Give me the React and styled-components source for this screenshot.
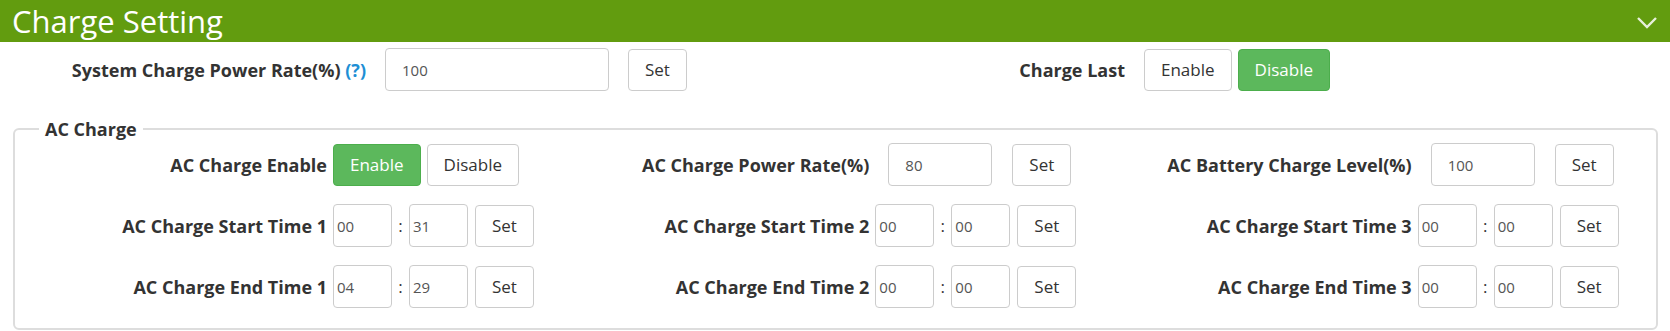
import React from 'react';
import styled, { createGlobalStyle } from 'styled-components';

const GlobalStyle = createGlobalStyle`
  body {
    margin: 0;
    background: #fff;
    font-family: "Open Sans", "Noto Sans", sans-serif;
    color: #333;
  }
  * {
    box-sizing: border-box;
  }
`;

const timeRows = [
  ['AC Charge Start Time 1', '00', '31'],
  ['AC Charge Start Time 2', '00', '00'],
  ['AC Charge Start Time 3', '00', '00'],
  ['AC Charge End Time 1', '04', '29'],
  ['AC Charge End Time 2', '00', '00'],
  ['AC Charge End Time 3', '00', '00'],
];

const App = () => {
  return (
    <>
      <GlobalStyle />
      <Panel>
        <Header>
          <Title>Charge Setting</Title>
          <svg width="20" height="12" viewBox="0 0 20 12">
            <polyline points="1,1 10,10 19,1" fill="none" stroke="rgba(255,255,255,0.85)" strokeWidth="2.4" />
          </svg>
        </Header>

        <TopRow>
          <Field>
            <Label $width={366} $gap={19}>
              System Charge Power Rate(%) <Help>(?)</Help>
            </Label>
            <TextInput $width={224} defaultValue="100" />
            <Button $ml={19}>Set</Button>
          </Field>
          <Field>
            <Label $width={366} $gap={19}>Charge Last</Label>
            <Button>Enable</Button>
            <Button $active $ml={6}>Disable</Button>
          </Field>
        </TopRow>

        <Group>
          <Legend>AC Charge</Legend>
          <Grid>
            <Field>
              <Label>AC Charge Enable</Label>
              <Button $active>Enable</Button>
              <Button $ml={6}>Disable</Button>
            </Field>
            <Field>
              <Label>AC Charge Power Rate(%)</Label>
              <TextInput $width={104} $ml={13} defaultValue="80" />
              <Button $ml={20}>Set</Button>
            </Field>
            <Field>
              <Label>AC Battery Charge Level(%)</Label>
              <TextInput $width={104} $ml={13} defaultValue="100" />
              <Button $ml={20}>Set</Button>
            </Field>
            {timeRows.map(([name, h, m]) => (
              <Field key={name}>
                <Label>{name}</Label>
                <TimeInput defaultValue={h} />
                <Colon>:</Colon>
                <TimeInput defaultValue={m} />
                <Button $ml={7}>Set</Button>
              </Field>
            ))}
          </Grid>
        </Group>
      </Panel>
    </>
  );
};

const Panel = styled.div`
  width: 1670px;
  height: 331px;
  background: #fff;
`;

const Header = styled.div`
  display: flex;
  align-items: center;
  justify-content: space-between;
  height: 42px;
  padding: 0 13px 0 12px;
  background: #629c0f;
  color: #fff;

  svg {
    margin-top: 3px;
  }
`;

const Title = styled.div`
  font-size: 31px;
  line-height: 42px;
  font-weight: 400;
`;

const TopRow = styled.div`
  display: grid;
  grid-template-columns: 759px 1fr;
  padding-top: 6px;
`;

const Field = styled.div`
  display: flex;
  align-items: center;
  height: 43px;
`;

const Label = styled.div`
  flex: none;
  width: ${(p) => p.$width || 305}px;
  margin-right: ${(p) => p.$gap || 6}px;
  text-align: right;
  font-size: 18px;
  font-weight: 700;
  color: #333;
  white-space: nowrap;
`;

const Help = styled.span`
  color: #1e8fd5;
`;

const TextInput = styled.input`
  width: ${(p) => p.$width}px;
  height: 43px;
  margin-left: ${(p) => p.$ml || 0}px;
  padding: 0 16px;
  border: 1px solid #ccc;
  border-radius: 4px;
  font-family: inherit;
  font-size: 15px;
  color: #555;
  background: #fff;
  outline: none;
`;

const TimeInput = styled(TextInput)`
  width: 59px;
  padding: 0 3px;
`;

const Colon = styled.span`
  width: 17px;
  text-align: center;
  font-size: 17px;
  color: #333;
`;

const Button = styled.button`
  height: 42px;
  margin-left: ${(p) => p.$ml || 0}px;
  padding: 0 16px;
  border: 1px solid ${(p) => (p.$active ? '#4cae4c' : '#ccc')};
  border-radius: 4px;
  background: ${(p) => (p.$active ? '#5cb85c' : '#fff')};
  color: ${(p) => (p.$active ? '#fff' : '#333')};
  font-family: inherit;
  font-size: 17px;
  cursor: pointer;
`;

const Group = styled.fieldset`
  margin: 26px 12px 0 13px;
  padding: 2px 7px 20px;
  border: 2px solid #ddd;
  border-radius: 6px;
`;

const Legend = styled.legend`
  margin-left: 17px;
  padding: 0 6px;
  font-size: 18px;
  font-weight: 700;
  line-height: 24px;
  color: #333;
`;

const Grid = styled.div`
  display: grid;
  grid-template-columns: repeat(3, 1fr);
  row-gap: 18px;
`;

export default App;
